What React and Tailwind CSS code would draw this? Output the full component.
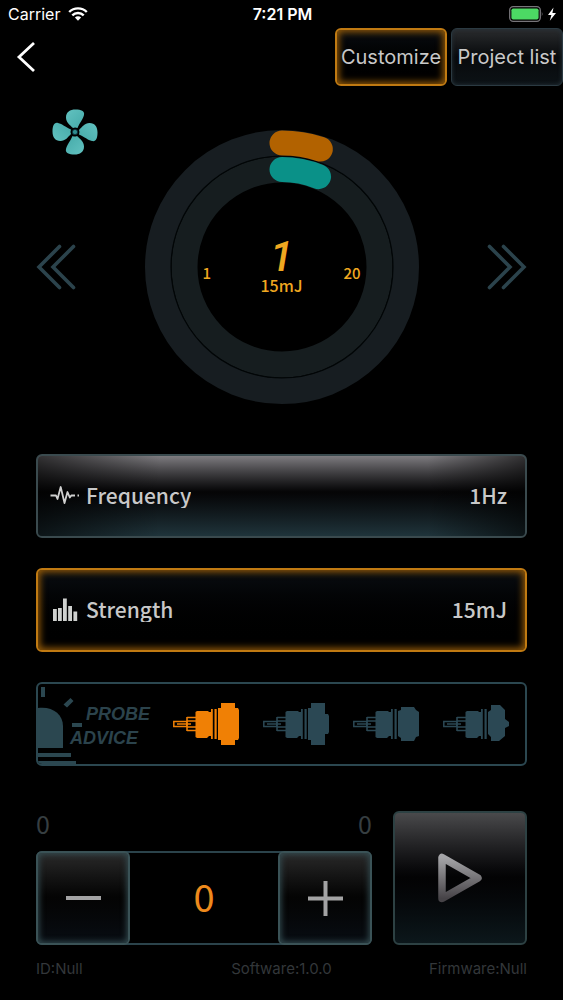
import { useState } from "react";

// ── Icons ─────────────────────────────────────────────────────────────────────
function WifiIcon() {
  return (
    <svg width="20" height="14" viewBox="0 0 20 14" fill="none" stroke="white" strokeWidth="2.4">
      <path d="M1.2 5a12.4 12.4 0 0 1 17.6 0" />
      <path d="M4.3 8.3a8.1 8.1 0 0 1 11.4 0" />
      <path d="M10 13.8 6.9 10.6a4.4 4.4 0 0 1 6.2 0z" fill="white" stroke="none" />
    </svg>
  );
}

function BatteryIcon() {
  return (
    <svg width="48" height="16" viewBox="0 0 48 16">
      <rect x="0.7" y="0.7" width="30.6" height="14.6" rx="3.5" fill="none" stroke="#77757a" strokeWidth="1.3" />
      <rect x="2.4" y="2.4" width="27.2" height="11.2" rx="1.8" fill="#4cd964" />
      <path d="M32.8 5.5q1.6 2.5 0 5z" fill="#77757a" />
      <path d="M44.5 1.5 39 9h3.4l-1.6 5.8L47 7h-3.6z" fill="white" />
    </svg>
  );
}

function FanIcon() {
  const blade =
    "M-2-4C-5-7-9-9.500-9-14.500-9-20-5-22.500.5-22.500 6-22.500 10-21 9-17 8-12.500 5-10 2.500-4Q0-5-2-4z";
  return (
    <svg width="46" height="46" viewBox="-23 -23 46 46">
      <defs>
        <linearGradient id="fan" x1="0" y1="0" x2="1" y2="1">
          <stop offset="0" stopColor="#62c2c0" />
          <stop offset="1" stopColor="#45aaa9" />
        </linearGradient>
      </defs>
      <g fill="url(#fan)">
        <path d={blade} />
        <path d={blade} transform="rotate(90)" />
        <path d={blade} transform="rotate(180)" />
        <path d={blade} transform="rotate(270)" />
      </g>
      <circle r="2.6" fill="#2f8d90" stroke="#0b2a38" strokeWidth="0.8" />
    </svg>
  );
}

function DoubleChevron({ className }) {
  return (
    <svg
      className={className}
      width="40"
      height="46"
      viewBox="0 0 40 46"
      fill="none"
      stroke="#2b434c"
      strokeWidth="3.6"
      strokeLinecap="round"
    >
      <path d="M23.5 2.500 3 23l20.500 20.500" />
      <path d="M37.500 2.500 17 23l20.500 20.500" />
    </svg>
  );
}

function PulseIcon() {
  return (
    <svg width="30" height="20" viewBox="0 0 30 20" fill="none" stroke="#d0d0d0" strokeWidth="1.8" strokeLinejoin="round">
      <path d="M.5 10.5H6l1.500 3.500 3.200-12 3.800 16 3-11 2.300 5.500 1.500-2H25M27.500 10.500H29" />
    </svg>
  );
}

function BarsIcon() {
  return (
    <svg width="30" height="24" viewBox="0 0 30 24" fill="#cfd1cf">
      <path d="M3 12h3.800v12H3zM8 11h3.800v13H8zM13 1.500h3.800V24H13zM18.200 9H22v15h-3.800zM23.400 14.500h3.800V24h-3.800z" />
    </svg>
  );
}

function BeaconIcon() {
  return (
    <svg className="shrink-0" width="48" height="80" viewBox="0 0 48 80" fill="#2b4750">
      <path d="M3 3h4v10H3zM32.500 14l3 3-6.500 6.500-3.500-3zM34 39h10v4H34z" />
      <path d="M0 24c14-2 25 6 25 18v22H0z" />
      <path d="M0 69h33v4H0zM0 77h38v3H0z" />
    </svg>
  );
}

// Outline of each probe's back end
const PROBE_HEADS = [
  "M48 0h14v5h3l1 2v28l-1 2h-3v5H48v-5h-3V5h3z",
  "M48 0h14v11h3l1 2v16l-1 2h-3v11H48v-5h-3V5h3z",
  "M48 4h13l2 3 3 2v24l-3 1-2 4H48v-3l-3-2V8l3-1z",
  "M48 2h9l5 5v9l4 3v4l-4 2v8l-6 5h-8v-4l-3-3V9l3-2z",
];

function ProbeIcon({ head }) {
  return (
    <svg width="68" height="42" viewBox="0 0 68 42" fill="currentColor">
      <path d="M22.500 9 24 8h11l1 1h3v24h-3l-2 2H24l-1.500-1z" />
      <path d="M38 6h1.800v30H38zM41.500 6h2.200v30h-2.200z" />
      <path d={head} />
      <path d="M14 14.500h9M14 27.500h9M14 14v14M14 18h9M14 24h9" fill="none" stroke="currentColor" strokeWidth="1.600" />
      <path d="M.8 18.500h13v5H.8zM4 21h14" fill="none" stroke="currentColor" strokeWidth="1.500" />
    </svg>
  );
}

function PlayIcon() {
  return (
    <svg width="46" height="52" viewBox="0 0 46 52" fill="none">
      <defs>
        <linearGradient id="play" x1="0" y1="0" x2="0" y2="1">
          <stop offset="0" stopColor="#a5a5a8" />
          <stop offset="1" stopColor="#464347" />
        </linearGradient>
      </defs>
      <path d="M5 5.500v41l36-20.500z" stroke="url(#play)" strokeWidth="7.5" strokeLinejoin="round" />
    </svg>
  );
}

// ── Gauge ─────────────────────────────────────────────────────────────────────
// Arc that starts at twelve o'clock and runs clockwise
function arc(r, deg) {
  const a = (deg * Math.PI) / 180;
  return `M0 ${-r}A${r} ${r} 0 0 1 ${r * Math.sin(a)} ${-r * Math.cos(a)}`;
}

function Gauge({ frequency, strength }) {
  return (
    <div className="relative size-[274px]">
      <svg className="size-full" viewBox="-137 -137 274 274" fill="none">
        <circle r="124" stroke="#171d21" strokeWidth="26" />
        <circle r="97.500" stroke="#161d1f" strokeWidth="26" />
        <circle r="111" stroke="#020607" strokeWidth="1.200" />
        <path d={arc(124, 18)} stroke="#b26200" strokeWidth="25" strokeLinecap="round" />
        <path d={arc(97.5, 22)} stroke="#0a9188" strokeWidth="25" strokeLinecap="round" />
      </svg>
      <div className="absolute inset-0 grid grid-cols-[1fr_auto_1fr] items-center px-[58px] font-['Noto_Sans_CJK_SC',sans-serif] font-medium text-[#f0a820]">
        <span className="pt-3 text-[15px]">1</span>
        <div className="text-center">
          <p className="font-[Roboto,sans-serif] text-[42px] leading-9 font-medium italic">{frequency}</p>
          <p className="text-base leading-5">{strength}mJ</p>
        </div>
        <span className="pt-3 text-right text-[15px]">20</span>
      </div>
    </div>
  );
}

const GLOW =
  "border-2 border-[#c07a12] bg-linear-to-b from-[#0a0e12] to-black shadow-[inset_0_0_7px_2px_#945a08]";
const STEP =
  "-m-0.5 flex w-[94px] items-center justify-center rounded-md border-2 border-[#3a5256] bg-linear-to-b from-[#2a2a2a] via-[#040404] to-[#080d13] shadow-[inset_0_0_6px_1px_#354e53]";

const PROBES = ["Probe 1", "Probe 2", "Probe 3", "Probe 4"];

function App() {
  const [frequency] = useState(1);
  const [strength] = useState(15);
  const [probe, setProbe] = useState(0);
  const [count, setCount] = useState(0);

  return (
    <div className="min-h-screen bg-black font-[Inter,sans-serif] text-[#c8c8c8]">
      {/* Status bar */}
      <div className="grid h-7 grid-cols-3 items-center pr-1.5 pl-2 text-white">
        <div className="flex items-center gap-2 text-base">
          Carrier <WifiIcon />
        </div>
        <p className="text-center text-base font-semibold">7:21 PM</p>
        <div className="flex justify-end">
          <BatteryIcon />
        </div>
      </div>

      {/* Header */}
      <header className="flex items-center justify-between pl-4">
        <button aria-label="Back">
          <svg width="20" height="32" viewBox="0 0 20 32" fill="none" stroke="white" strokeWidth="2.800">
            <path d="M18 2 3 16l15 14" />
          </svg>
        </button>
        <nav className="flex gap-1 text-xl">
          <button className={`h-[58px] w-28 rounded-md ${GLOW}`}>Customize</button>
          <button className="h-[58px] w-28 rounded-md border border-[#2b3a42] bg-linear-to-b from-[#2a2c2e] via-[#080a0c] to-[#0c1216] whitespace-nowrap shadow-[inset_0_0_4px_#26323a]">
            Project list
          </button>
        </nav>
      </header>

      <main className="px-9">
        {/* Dial */}
        <section className="mt-[23px] grid h-[316px] grid-cols-[1fr_auto_1fr] grid-rows-[1fr_auto_1fr]">
          <div className="pl-4">
            <FanIcon />
          </div>
          <button aria-label="Decrease" className="row-start-2 justify-self-start">
            <DoubleChevron />
          </button>
          <div className="col-start-2 row-span-3 row-start-1 self-center">
            <Gauge frequency={frequency} strength={strength} />
          </div>
          <button aria-label="Increase" className="col-start-3 row-start-2 justify-self-end">
            <DoubleChevron className="rotate-180" />
          </button>
        </section>

        {/* Settings */}
        <section className="mt-[29px] flex flex-col gap-[30px] font-['Noto_Sans_CJK_SC',sans-serif] text-[21px] leading-[26px] font-medium">
          <button className="relative flex h-[84px] items-center justify-between overflow-hidden rounded-md border-2 border-[#3a4a4e] bg-linear-to-b from-[#7e7c80] via-[#050506] via-45% to-[#1f343b] px-3 pb-0.5">
            <span className="absolute inset-0 bg-linear-to-r from-black/60 via-transparent via-25% to-transparent" />
            <span className="absolute inset-0 bg-linear-to-l from-black/60 to-transparent to-20%" />
            <span className="relative flex items-center gap-1.5">
              <PulseIcon /> <span className="overflow-hidden">Frequency</span>
            </span>
            <span className="relative pr-1.5">{frequency}Hz</span>
          </button>
          <button className={`flex h-[84px] items-center justify-between rounded-md px-3 pb-0.5 ${GLOW}`}>
            <span className="flex items-center gap-1.5">
              <BarsIcon /> <span className="overflow-hidden">Strength</span>
            </span>
            <span className="pr-1.5">{strength}mJ</span>
          </button>
        </section>

        {/* Probe advice */}
        <section className="mt-[30px] flex h-[84px] items-center justify-between overflow-hidden rounded-md border-2 border-[#2b4750] pr-3.5">
          <div className="flex items-center">
            <BeaconIcon />
            <h2 className="-ml-4 pt-1 font-['Liberation_Sans',sans-serif] text-lg leading-6 font-bold text-[#2b434c] italic">
              <span className="block pl-4">PROBE</span>
              <span className="block">ADVICE</span>
            </h2>
          </div>
          <div className="flex gap-[22px]">
            {PROBES.map((name, i) => (
              <button
                key={name}
                aria-label={name}
                onClick={() => setProbe(i)}
                className={i === probe ? "text-[#f08005]" : "text-[#2b4854]"}
              >
                <ProbeIcon head={PROBE_HEADS[i]} />
              </button>
            ))}
          </div>
        </section>

        {/* Counter and start */}
        <section className="mt-[43px] flex items-end gap-[21px] font-['Noto_Sans_CJK_SC',sans-serif]">
          <div className="flex-1">
            <div className="mb-3.5 flex justify-between text-[25px] leading-7 text-[#363e41]">
              <span>0</span>
              <span>0</span>
            </div>
            <div className="flex h-[94px] items-stretch justify-between rounded-md border-2 border-[#2b434b]">
              <button aria-label="Minus" onClick={() => setCount(Math.max(0, count - 1))} className={STEP}>
                <span className="h-1 w-[35px] bg-[#a3a3a4]" />
              </button>
              <output className="self-center pb-1 text-[38px] leading-10 text-[#ee8a1c]">{count}</output>
              <button aria-label="Plus" onClick={() => setCount(count + 1)} className={STEP}>
                <svg width="35" height="35" viewBox="0 0 35 35" stroke="#a3a3a4" strokeWidth="4">
                  <path d="M0 17.500h35M17.500 0v35" />
                </svg>
              </button>
            </div>
          </div>
          <button
            aria-label="Start"
            className="flex size-[134px] items-center justify-center rounded-md border-2 border-[#2d4143] bg-linear-to-b from-[#4a4a4c] via-[#030304] to-[#0c171b]"
          >
            <PlayIcon />
          </button>
        </section>

        <footer className="mt-3.5 grid grid-cols-3 text-[15px] leading-5 text-[#33373a]">
          <span>ID:Null</span>
          <span className="text-center">Software:1.0.0</span>
          <span className="text-right">Firmware:Null</span>
        </footer>
      </main>
    </div>
  );
}

export default App;
